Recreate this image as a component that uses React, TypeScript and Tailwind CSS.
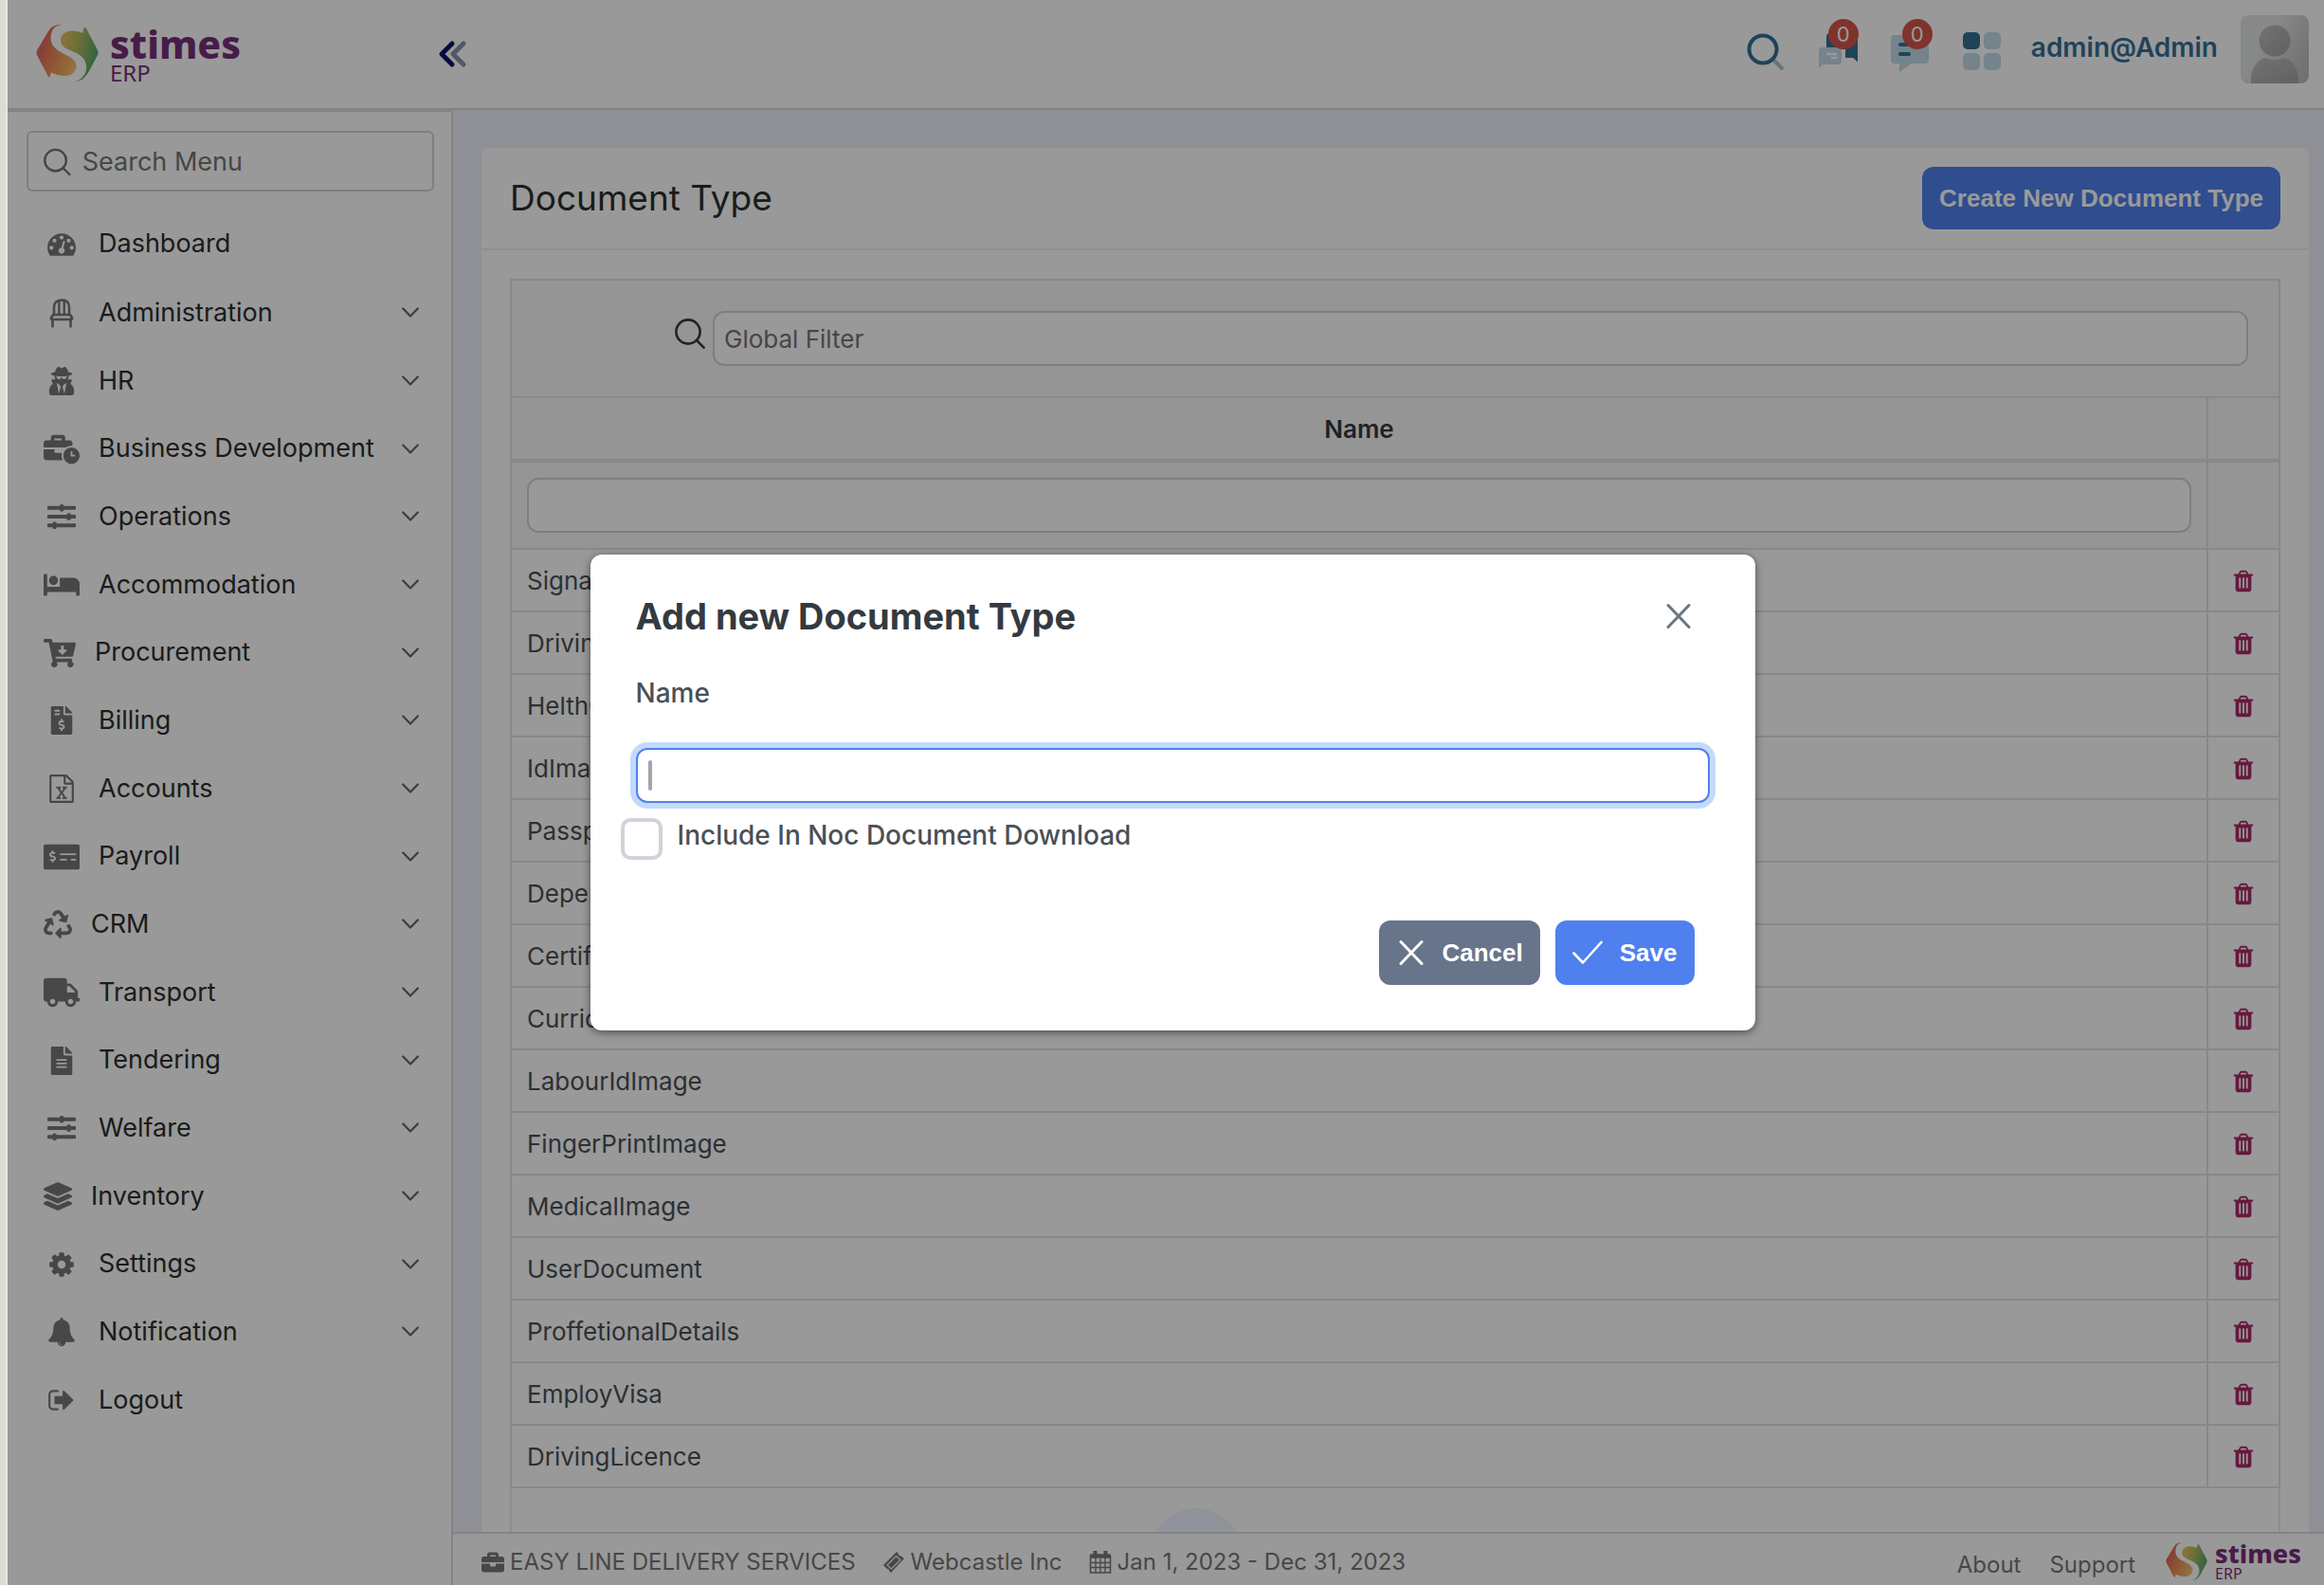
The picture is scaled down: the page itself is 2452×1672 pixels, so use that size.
import React from "react";
import {
  FaBed,
  FaBriefcase,
  FaBusinessTime,
  FaCartArrowDown,
  FaFileAlt,
  FaFileInvoiceDollar,
  FaLayerGroup,
  FaMoneyCheckAlt,
  FaRecycle,
  FaTruck,
  FaUserSecret,
} from "react-icons/fa";

const glyphs = {
  gauge:
    "M384 1152q0-53-37.5-90.5t-90.5-37.5-90.5 37.5-37.5 90.5 37.5 90.5 90.5 37.5 90.5-37.5 37.5-90.5zm192-448q0-53-37.5-90.5t-90.5-37.5-90.5 37.5-37.5 90.5 37.5 90.5 90.5 37.5 90.5-37.5 37.5-90.5zm428 481l101-382q6-26-7.5-48.5t-38.5-29.5-48 6.5-30 39.5l-101 382q-60 5-107 43.5t-63 98.5q-20 77 20 146t117 89 146-20 89-117q16-60-6-117t-72-91zm660-33q0-53-37.5-90.5t-90.5-37.5-90.5 37.5-37.5 90.5 37.5 90.5 90.5 37.5 90.5-37.5 37.5-90.5zm-640-640q0-53-37.5-90.5t-90.5-37.5-90.5 37.5-37.5 90.5 37.5 90.5 90.5 37.5 90.5-37.5 37.5-90.5zm448 192q0-53-37.5-90.5t-90.5-37.5-90.5 37.5-37.5 90.5 37.5 90.5 90.5 37.5 90.5-37.5 37.5-90.5zm320 448q0 261-141 483-19 29-54 29h-1402q-35 0-54-29-141-221-141-483 0-182 71-348t191-286 286-191 348-71 348 71 286 191 191 286 71 348z",
  cog: "M1152 896q0-106-75-181t-181-75-181 75-75 181 75 181 181 75 181-75 75-181zm512-109v222q0 12-8 23t-20 13l-185 28q-19 54-39 91 35 50 107 138 10 12 10 25t-9 23q-27 37-99 108t-94 71q-12 0-26-9l-138-108q-44 23-91 38-16 136-29 186-7 28-36 28h-222q-14 0-24.5-8.5t-11.5-21.5l-28-184q-49-16-90-37l-141 107q-10 9-25 9-14 0-25-11-126-114-165-168-7-10-7-23 0-12 8-23 15-21 51-66.5t54-70.5q-27-50-41-99l-183-27q-13-2-21-12.5t-8-23.5v-222q0-12 8-23t19-13l186-28q14-46 39-92-40-57-107-138-10-12-10-24 0-10 9-23 26-36 98.5-107.5t94.5-71.5q13 0 26 10l138 107q44-23 91-38 16-136 29-186 7-28 36-28h222q14 0 24.5 8.5t11.5 21.5l28 184q49 16 90 37l142-107q9-9 24-9 13 0 25 10 129 119 165 170 7 8 7 22 0 12-8 23-15 21-51 66.5t-54 70.5q26 50 41 98l183 28q13 2 21 12.5t8 23.5z",
  bell: "M912 1696q0-16-16-16-59 0-101.5-42.5t-42.5-101.5q0-16-16-16t-16 16q0 73 51.5 124.5t124.5 51.5q16 0 16-16zm816-288q0 52-38 90t-90 38h-448q0 106-75 181t-181 75-181-75-75-181h-448q-52 0-90-38t-38-90q50-42 91-88t85-119.5 74.5-158.5 50-206 19.5-260q0-152 117-282.5t307-158.5q-8-19-8-39 0-40 28-68t68-28 68 28 28 68q0 20-8 39 190 28 307 158.5t117 282.5q0 139 19.5 260t50 206 74.5 158.5 85 119.5 91 88z",
  signOut:
    "M704 1440q0 4 1 20t.5 26.5-3 23.5-10 19.5-20.5 6.5h-320q-119 0-203.5-84.5t-84.5-203.5v-704q0-119 84.5-203.5t203.5-84.5h320q13 0 22.5 9.5t9.5 22.5q0 4 1 20t.5 26.5-3 23.5-10 19.5-20.5 6.5h-320q-66 0-113 47t-47 113v704q0 66 47 113t113 47h312l11.5 1 11.5 3 8 5.5 7 9 2 13.5zm928-544q0 26-19 45l-544 544q-19 19-45 19t-45-19-19-45v-288h-448q-26 0-45-19t-19-45v-384q0-26 19-45t45-19h448v-288q0-26 19-45t45-19 45 19l544 544q19 19 19 45z",
  excel:
    "M1596 380q28 28 48 76t20 88v1152q0 40-28 68t-68 28h-1344q-40 0-68-28t-28-68v-1600q0-40 28-68t68-28h896q40 0 88 20t76 48zm-444-244v376h376q-10-29-22-41l-313-313q-12-12-41-22zm384 1528v-1024h-416q-40 0-68-28t-28-68v-416h-768v1536h1280zm-979-234v106h281v-106h-75l103-161q5-7 10-16.5t7.5-13.5 3.5-4h2q1 4 5 10 2 4 4.5 7.5t6 8 6.5 8.5l107 161h-76v106h291v-106h-68l-192-273 195-282h67v-107h-279v107h74l-103 159q-4 7-10 16.5t-9 13.5l-2 3h-2q-1-4-5-10-6-11-17-23l-106-159h76v-107h-290v107h68l189 272-194 283h-68z",
  trash:
    "M704 1376v-704q0-14-9-23t-23-9h-64q-14 0-23 9t-9 23v704q0 14 9 23t23 9h64q14 0 23-9t9-23zm256 0v-704q0-14-9-23t-23-9h-64q-14 0-23 9t-9 23v704q0 14 9 23t23 9h64q14 0 23-9t9-23zm256 0v-704q0-14-9-23t-23-9h-64q-14 0-23 9t-9 23v704q0 14 9 23t23 9h64q14 0 23-9t9-23zm-544-992h448l-48-117q-7-9-17-11h-317q-10 2-17 11zm928 32v64q0 14-9 23t-23 9h-96v948q0 83-47 143.5t-113 60.5h-832q-66 0-113-58.5t-47-141.5v-952h-96q-14 0-23-9t-9-23v-64q0-14 9-23t23-9h309l70-167q15-37 54-63t79-26h320q40 0 79 26t54 63l70 167h309q14 0 23 9t9 23z",
};

function Glyph({ name, size = 30 }: { name: keyof typeof glyphs; size?: number }) {
  return (
    <svg width={size} height={size} viewBox="0 0 1792 1792" fill="currentColor" aria-hidden="true">
      <path d={glyphs[name]} />
    </svg>
  );
}

function ChairIcon() {
  return (
    <svg width="26" height="31" viewBox="0 0 26 31" fill="none" stroke="currentColor" strokeWidth="2.6" aria-hidden="true">
      <path d="M5 17V9.5C5 4.5 7.5 1.5 13 1.5S21 4.500 21 9.500V17" />
      <path d="M10.300 2.500V17M15.700 2.500V17" strokeWidth="2.400" />
      <path d="M4 17h18l2 3.200c.5 1-.2 1.800-1.200 1.800H3.200C2.200 22 1.500 21.200 2 20.200z" strokeLinejoin="round" />
      <path d="M3.500 22v7.500M22.500 22v7.500" strokeLinecap="round" />
    </svg>
  );
}

function SlidersIcon() {
  return (
    <svg width="30" height="26" viewBox="0 0 30 26" fill="currentColor" aria-hidden="true">
      <rect y="1.800" width="30" height="4" rx="0.800" />
      <rect x="13" width="4.200" height="7.600" rx="1.500" />
      <rect y="11" width="30" height="4" rx="0.800" />
      <rect x="20.500" y="9.200" width="4.200" height="7.600" rx="1.500" />
      <rect y="20.200" width="30" height="4" rx="0.800" />
      <rect x="5.500" y="18.400" width="4.200" height="7.600" rx="1.500" />
    </svg>
  );
}

function SearchIcon({ className }: { className?: string }) {
  return (
    <svg className={className} width="32" height="32" viewBox="0 0 32 32" fill="none" stroke="currentColor" strokeWidth="2.600" strokeLinecap="round" aria-hidden="true">
      <circle cx="14" cy="14" r="12.600" />
      <path d="M23 23l7.600 7.600" />
    </svg>
  );
}

function ChevronDown() {
  return (
    <svg width="18" height="12" viewBox="0 0 18 12" fill="none" stroke="currentColor" strokeWidth="2.200" strokeLinecap="round" strokeLinejoin="round" aria-hidden="true">
      <path d="M1.200 1.500L9 9.500l7.800-8" />
    </svg>
  );
}

function CrossIcon() {
  return (
    <svg width="26" height="28" viewBox="0 0 26 28" fill="none" stroke="currentColor" strokeWidth="3" strokeLinecap="round" aria-hidden="true">
      <path d="M2 2.500l22 23M24 2.500l-22 23" />
    </svg>
  );
}

function CheckIcon() {
  return (
    <svg width="32" height="26" viewBox="0 0 32 26" fill="none" stroke="currentColor" strokeWidth="2.600" strokeLinecap="round" strokeLinejoin="round" aria-hidden="true">
      <path d="M1.500 13.500l9.500 10L30.500 2" />
    </svg>
  );
}

function LogoMark({ id, className }: { id: string; className: string }) {
  return (
    <svg className={className} viewBox="0 0 66 60" aria-hidden="true">
      <defs>
        <linearGradient id={id + "-warm"} x1="0" y1="0.300" x2="1" y2="0.800">
          <stop offset="0.150" stopColor="#e4695c" />
          <stop offset="0.600" stopColor="#ee9a5a" />
          <stop offset="1" stopColor="#f3c36c" />
        </linearGradient>
        <linearGradient id={id + "-cool"} x1="0" y1="0.200" x2="1" y2="0.550">
          <stop offset="0" stopColor="#edc060" />
          <stop offset="0.400" stopColor="#b9bb5c" />
          <stop offset="1" stopColor="#4fa66b" />
        </linearGradient>
      </defs>
      <path
        fill={`url(#${id}-warm)`}
        d="M26 0C20 0 16 2 13 7L1 27Q0 29.500 1 32L12.500 54Q13.500 56.500 14.500 55L16 50.500C20 53 26 54 31 54C38 54 43 49 42.500 43C42 37 36 34 28 30C18 25 14 19 16 10C17 5 20 1 26 .5Z"
      />
      <path
        fill={`url(#${id}-cool)`}
        d="M50.500 3.500Q51.500 2 53 4L65 27Q66 29.500 65 32L56 49C52 56 48 59.500 42 60C50 57 54 50 53 43C52 35 46 31 38 28C31 25 25 22 26 15C27 9 33 6 39 6.500C43 6.700 46 7.500 49 9Z"
      />
    </svg>
  );
}

type MenuEntry = { label: string; icon: React.ReactNode; natural?: boolean; leaf?: boolean };

const menu: MenuEntry[] = [
  { label: "Administration", icon: <ChairIcon /> },
  { label: "HR", icon: <FaUserSecret size={30} /> },
  { label: "Business Development", icon: <FaBusinessTime size={38} /> },
  { label: "Operations", icon: <SlidersIcon /> },
  { label: "Accommodation", icon: <FaBed size={38} /> },
  { label: "Procurement", icon: <FaCartArrowDown size={34} />, natural: true },
  { label: "Billing", icon: <FaFileInvoiceDollar size={30} /> },
  { label: "Accounts", icon: <Glyph name="excel" /> },
  { label: "Payroll", icon: <FaMoneyCheckAlt size={38} /> },
  { label: "CRM", icon: <FaRecycle size={30} />, natural: true },
  { label: "Transport", icon: <FaTruck size={38} /> },
  { label: "Tendering", icon: <FaFileAlt size={30} /> },
  { label: "Welfare", icon: <SlidersIcon /> },
  { label: "Inventory", icon: <FaLayerGroup size={30} />, natural: true },
  { label: "Settings", icon: <Glyph name="cog" /> },
  { label: "Notification", icon: <Glyph name="bell" /> },
  { label: "Logout", icon: <Glyph name="signOut" />, leaf: true },
];

const documentTypes = [
  "SignatureImage",
  "DrivingLicenseImage",
  "HelthCardImage",
  "IdImage",
  "PassportImage",
  "DependentImage",
  "CertificateImage",
  "CurriculumVitae",
  "LabourIdImage",
  "FingerPrintImage",
  "MedicalImage",
  "UserDocument",
  "ProffetionalDetails",
  "EmployVisa",
  "DrivingLicence",
];

function MenuButton({ entry }: { entry: MenuEntry }) {
  return (
    <button type="button" className="flex h-full w-full items-center pr-[34px] pl-[38px] text-left">
      <span className={entry.natural ? "flex shrink-0 text-[#777]" : "flex w-[38px] shrink-0 justify-center text-[#777]"}>
        {entry.icon}
      </span>
      <span className="ml-5 flex-1 text-[27px] whitespace-nowrap text-[#2c2f2e]">{entry.label}</span>
      {!entry.leaf && (
        <span className="text-[#666]">
          <ChevronDown />
        </span>
      )}
    </button>
  );
}

function Header() {
  return (
    <header className="flex h-[116px] shrink-0 border-b-2 border-[#dadada] bg-white">
      <div className="flex w-[450px] shrink-0 items-start pt-[26px] pl-[30px]">
        <LogoMark id="top" className="h-[60px] w-[66px]" />
        <div className="ml-3 font-['Noto_Sans'] text-[#78307b]">
          <div className="text-[41px] leading-10 font-extrabold">stimes</div>
          <div className="text-2xl leading-[22px]">ERP</div>
        </div>
      </div>
      <button type="button" aria-label="Collapse menu" className="flex items-center">
        <svg width="40" height="30" viewBox="0 0 40 30" fill="none" strokeWidth="5" strokeLinecap="round" strokeLinejoin="round">
          <path d="M31 4L20 15l11 11" stroke="#8c91ad" />
          <path d="M19 4L8 15l11 11" stroke="#03176a" />
        </svg>
      </button>
      <div className="ml-auto flex items-start gap-7 pr-4 text-[#347195]">
        <button type="button" aria-label="Search" className="mt-[30px] flex h-12 w-12 items-center justify-center">
          <svg width="42" height="42" viewBox="0 0 42 42" fill="none" strokeWidth="4" strokeLinecap="round">
            <path d="M30 31l8 8" stroke="#a9c1cf" />
            <circle cx="18" cy="19" r="14.500" stroke="#347195" />
          </svg>
        </button>
        <button type="button" aria-label="Chats" className="relative mt-[30px] flex h-12 w-12 items-center justify-center">
          <svg width="42" height="42" viewBox="0 0 42 42">
            <path d="M9 18V6a4 4 0 014-4h26a4 4 0 014 4v27l-6-5h-8V19H9z" fill="#347195" />
            <path d="M4 17H21a4 4 0 014 4V31a4 4 0 01-4 4H5l-4 4V21a4 4 0 014-4z" fill="#c1dae9" />
            <path d="M9 24h11M14 28h6" stroke="#fff" strokeWidth="2.400" />
          </svg>
          <span className="absolute -top-2.5 right-0.5 flex h-8 w-8 items-center justify-center rounded-full bg-[#d5554a] text-[22px] text-white">0</span>
        </button>
        <button type="button" aria-label="Messages" className="relative mt-8 flex h-12 w-12 items-center justify-center">
          <svg width="40" height="40" viewBox="0 0 40 40">
            <path d="M4 1h32a4 4 0 014 4v22a4 4 0 01-4 4H22L9 40V31H4a4 4 0 01-4-4V5a4 4 0 014-4z" fill="#c1dae9" />
            <path d="M10 11h16M10 21h9" stroke="#347195" strokeWidth="4" strokeLinecap="round" />
          </svg>
          <span className="absolute -top-3 right-0 flex h-8 w-8 items-center justify-center rounded-full bg-[#d5554a] text-[22px] text-white">0</span>
        </button>
        <button type="button" aria-label="Applications" className="mt-[30px] grid h-12 w-12 grid-cols-2 content-center justify-center gap-1 px-1">
          <span className="h-[18px] w-[18px] rounded-[5px] bg-[#347195]" />
          <span className="h-[18px] w-[18px] rounded-[5px] bg-[#c1dae9]" />
          <span className="h-[18px] w-[18px] rounded-[5px] bg-[#c1dae9]" />
          <span className="h-[18px] w-[18px] rounded-[5px] bg-[#c1dae9]" />
        </button>
        <div className="flex items-start gap-6">
          <span className="mt-[30px] text-[28px] leading-10 font-semibold">admin@Admin</span>
          <svg className="mt-4 h-[72px] w-[72px] rounded-lg" viewBox="0 0 72 72" role="img" aria-label="Profile">
            <defs>
              <linearGradient id="avatar" x1="0" y1="0" x2="1" y2="0.600">
                <stop offset="0.400" stopColor="#e2e5e5" />
                <stop offset="1" stopColor="#bfbfbf" />
              </linearGradient>
              <linearGradient id="figure" x1="0" y1="0" x2="1" y2="1">
                <stop offset="0.200" stopColor="#b9b9b9" />
                <stop offset="1" stopColor="#a2a2a2" />
              </linearGradient>
            </defs>
            <rect width="72" height="72" fill="url(#avatar)" />
            <circle cx="36" cy="27" r="16.500" fill="url(#figure)" />
            <path d="M11 72V66c0-9 7-19 15-21q10 4 20 0c8 2 15 12 15 21v6z" fill="url(#figure)" />
          </svg>
        </div>
      </div>
    </header>
  );
}

function Sidebar() {
  return (
    <aside className="flex w-[470px] shrink-0 flex-col border-t-2 border-r-2 border-[#dadada] bg-white">
      <label className="mt-5 mr-[18px] ml-5 flex h-16 items-center gap-3 rounded-md border-2 border-[#ced4da] px-4 pt-0.5 text-[#6c757d]">
        <SearchIcon />
        <input type="text" placeholder="Search Menu" aria-label="Search Menu" className="w-full bg-transparent text-[27px] outline-none placeholder:text-[#757575]" />
      </label>
      <nav className="pt-[18px]">
        <div className="h-[74px]">
          <MenuButton entry={{ label: "Dashboard", icon: <Glyph name="gauge" />, leaf: true }} />
        </div>
        <ul>
          {menu.map((entry) => (
            <li key={entry.label} className="h-[72px] nth-[3n]:h-[71px]">
              <MenuButton entry={entry} />
            </li>
          ))}
        </ul>
      </nav>
    </aside>
  );
}

function Content() {
  return (
    <main className="min-h-0 flex-1 overflow-hidden bg-[#eff1f9] pt-10 pr-4 pl-[30px]">
      <section className="rounded-lg bg-white">
        <div className="flex h-[108px] items-center justify-between border-b-2 border-[#f1f1f2] px-[30px]">
          <h1 className="text-[37px] text-[#2c2f2e]">Document Type</h1>
          <button type="button" className="h-[66px] rounded-xl bg-[#4f80ee] px-[18px] font-['Liberation_Sans'] text-[26px] font-bold text-white">
            Create New Document Type
          </button>
        </div>
        <div className="px-[30px] pt-[30px]">
          <div className="flex items-start gap-2 border-2 border-[#e2e3e5] bg-[#f8f8f8] py-8 pr-8 pl-[172px]">
            <SearchIcon className="mt-2 shrink-0 text-[#343a40]" />
            <input type="text" placeholder="Global Filter" aria-label="Global Filter" className="h-[58px] flex-1 rounded-xl border-2 border-[#ced4da] bg-white px-[10px] text-[26px] placeholder:text-[#757575]" />
          </div>
          <table className="w-full border-separate border-spacing-0 border-l-2 border-[#e2e3e5] text-[26px] text-[#495057]">
            <thead className="bg-[#f8f8f8]">
              <tr>
                <th scope="col" className="h-[68px] border-r-2 border-b-4 border-[#e2e3e5] p-0 font-semibold text-[#343a40]">Name</th>
                <th className="w-[76px] border-r-2 border-b-4 border-[#e2e3e5] p-0" />
              </tr>
              <tr>
                <td className="h-[92px] border-r-2 border-b-2 border-[#e2e3e5] px-4 py-0">
                  <input type="text" aria-label="Filter by name" className="block h-[58px] w-full rounded-xl border-2 border-[#ced4da] bg-white px-3" />
                </td>
                <td className="border-r-2 border-b-2 border-[#e2e3e5]" />
              </tr>
            </thead>
            <tbody>
              {documentTypes.map((name) => (
                <tr key={name}>
                  <td className="h-[66px] border-r-2 border-b-2 border-[#e2e3e5] px-4 py-0">{name}</td>
                  <td className="border-r-2 border-b-2 border-[#e2e3e5] p-0">
                    <button type="button" aria-label={`Delete ${name}`} className="flex w-full justify-center pt-0.5 text-[#ab2a68]">
                      <Glyph name="trash" size={26} />
                    </button>
                  </td>
                </tr>
              ))}
            </tbody>
          </table>
          <div className="flex justify-center border-x-2 border-[#ebebed] pt-[21px] pr-[420px]">
            <button type="button" aria-label="Page 1" className="h-24 w-24 rounded-full bg-[#eff6ff]" />
          </div>
        </div>
      </section>
    </main>
  );
}

function Footer() {
  return (
    <footer className="flex h-[56px] shrink-0 items-center border-t-2 border-[#dadada] bg-white pr-6 pl-[30px] text-2xl text-[#777]">
      <div className="flex items-center gap-7 pt-1.5">
        <span className="flex items-center gap-1.5">
          <FaBriefcase size={24} />
          EASY LINE DELIVERY SERVICES
        </span>
        <span className="flex items-center gap-1.5">
          <svg width="24" height="24" viewBox="0 0 24 24" aria-hidden="true">
            <path d="M15 1l2 2q-.5 2 2 2l4 3-14 15-2-2q.5-2-2-2l-4-4z" fill="currentColor" />
            <path d="M14.500 5.500l4.500 4L9.500 19 5 15z" fill="none" stroke="#fff" strokeWidth="1.200" />
          </svg>
          Webcastle Inc
        </span>
        <span className="flex items-center gap-1.5">
          <svg width="24" height="24" viewBox="0 0 24 24" fill="none" stroke="currentColor" aria-hidden="true">
            <path d="M1.500 5h21v18h-21z" strokeWidth="1.600" />
            <path d="M1.500 5.500h21" strokeWidth="4.500" />
            <path d="M6.500 1v5M17.500 1v5" strokeWidth="4" strokeLinecap="round" />
            <path d="M1.500 12.500h21M1.500 17.500h21M7 8v15M12 8v15M17 8v15" strokeWidth="1.300" />
          </svg>
          Jan 1, 2023 - Dec 31, 2023
        </span>
      </div>
      <div className="ml-auto flex items-center pt-1">
        <a href="#about" className="pt-2">About</a>
        <a href="#support" className="ml-[30px] pt-2">Support</a>
        <LogoMark id="bottom" className="ml-8 h-10 w-11" />
        <div className="ml-2 font-['Noto_Sans'] text-[#78307b]">
          <div className="text-[27px] leading-[26px] font-extrabold">stimes</div>
          <div className="text-base leading-4">ERP</div>
        </div>
      </div>
    </footer>
  );
}

function AddDocumentDialog() {
  return (
    <div className="absolute inset-0 flex items-center justify-center bg-black/40 pl-[14px]">
      <form
        role="dialog"
        aria-modal="true"
        aria-labelledby="dialog-title"
        className="w-[1229px] max-w-full rounded-xl bg-white px-12 pt-10 pb-12 text-[#495057] shadow-[0_2px_8px_rgba(0,0,0,0.5)]"
      >
        <div className="flex h-[50px] items-center justify-between pr-5">
          <h2 id="dialog-title" className="text-[38px] font-bold text-[#343a40]">Add new Document Type</h2>
          <button type="button" aria-label="Close" className="text-[#6c757d]">
            <CrossIcon />
          </button>
        </div>
        <label htmlFor="document-name" className="mt-9 block text-[28px] leading-10 font-medium">Name</label>
        <div className="relative mt-[38px]">
          <input
            id="document-name"
            type="text"
            className="block h-[58px] w-full rounded-xl border-2 border-[#4f80ee] bg-white px-3 text-[26px] shadow-[0_0_0_6px_#c4dafb] outline-none"
          />
          <span className="absolute top-[13px] left-[13px] h-8 w-1 rounded-sm bg-[#a2a6aa]" />
        </div>
        <div className="mt-4 -ml-4 flex h-11 items-start gap-4">
          <input id="include-noc" type="checkbox" className="h-11 w-11 appearance-none rounded-[10px] border-4 border-[#ced4da] bg-white" />
          <label htmlFor="include-noc" className="text-[28px] leading-9 font-medium">Include In Noc Document Download</label>
        </div>
        <div className="mt-16 flex justify-end gap-4 pr-4 font-['Liberation_Sans'] text-[26px] font-bold text-white">
          <button type="button" className="flex h-[68px] items-center gap-5 rounded-xl bg-[#68748a] pr-[18px] pl-[21px]">
            <CrossIcon />
            Cancel
          </button>
          <button type="button" className="flex h-[68px] items-center gap-[18px] rounded-xl bg-[#4f80ee] px-[18px]">
            <CheckIcon />
            Save
          </button>
        </div>
      </form>
    </div>
  );
}

export default function App() {
  return (
    <div className="flex h-screen overflow-hidden font-['Inter',sans-serif]">
      <div className="w-2 shrink-0 border-r-2 border-[#e9e7e2] bg-[#dedad4]" />
      <div className="relative flex min-w-0 flex-1 flex-col bg-white">
        <Header />
        <div className="flex min-h-0 flex-1">
          <Sidebar />
          <div className="flex min-w-0 flex-1 flex-col">
            <Content />
            <Footer />
          </div>
        </div>
        <AddDocumentDialog />
      </div>
    </div>
  );
}
